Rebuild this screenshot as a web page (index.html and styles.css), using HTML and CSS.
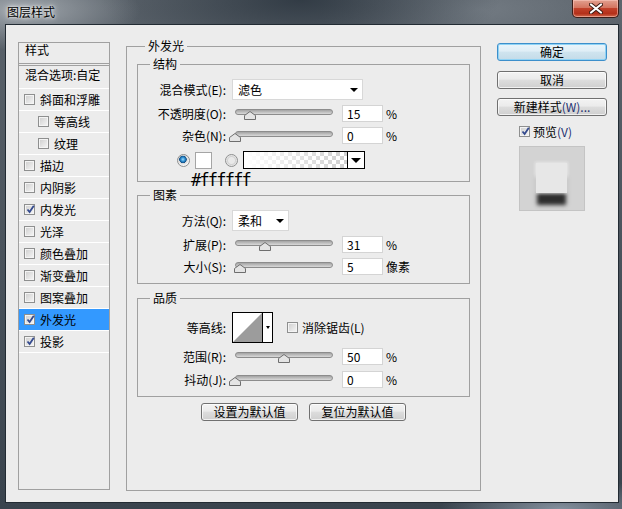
FILE: index.html
```html
<!DOCTYPE html>
<html lang="zh-CN">
<head>
    <meta charset="UTF-8">
    <title>图层样式</title>
    <link rel="stylesheet" href="styles.css">
</head>
<body>
    <div class="window">
        <div class="titlebar">
            <span class="title">图层样式</span>
            <div class="close">
                <svg width="14" height="11" viewBox="0 0 14 11">
                    <path d="M2 1.5 L12 9.5 M12 1.5 L2 9.5" stroke="#3b1a12" stroke-width="4" stroke-linecap="round"/>
                    <path d="M2 1.5 L12 9.5 M12 1.5 L2 9.5" stroke="#fff" stroke-width="2.2" stroke-linecap="round"/>
                </svg>
            </div>
        </div>

        <div class="client">
            <!-- style list -->
            <div class="styles-list">
                <div class="list-head">样式</div>
                <div class="list-blend">混合选项:自定</div>
                <div class="list-item"><span class="cb"></span>斜面和浮雕</div>
                <div class="list-item sub"><span class="cb"></span>等高线</div>
                <div class="list-item sub"><span class="cb"></span>纹理</div>
                <div class="list-item"><span class="cb"></span>描边</div>
                <div class="list-item"><span class="cb"></span>内阴影</div>
                <div class="list-item"><span class="cb checked"></span>内发光</div>
                <div class="list-item"><span class="cb"></span>光泽</div>
                <div class="list-item"><span class="cb"></span>颜色叠加</div>
                <div class="list-item"><span class="cb"></span>渐变叠加</div>
                <div class="list-item"><span class="cb"></span>图案叠加</div>
                <div class="list-item selected"><span class="cb checked"></span>外发光</div>
                <div class="list-item"><span class="cb checked"></span>投影</div>
            </div>

            <!-- outer glow settings -->
            <fieldset class="panel">
                <legend>外发光</legend>

                <fieldset class="group">
                    <legend>结构</legend>
                    <div class="row">
                        <label class="lbl">混合模式(E):</label>
                        <div class="select wide">滤色<i class="arrow"></i></div>
                    </div>
                    <div class="row">
                        <label class="lbl">不透明度(O):</label>
                        <div class="slider"><div class="track"></div><span class="thumb" style="left:15%"><svg width="12" height="9"><polygon points="0.5,4.5 6,0.5 11.5,4.5 11.5,8.5 0.5,8.5" fill="#e4e4e4" stroke="#6e6e6e"/></svg></span></div>
                        <input class="num" type="text" value="15">
                        <span class="unit">%</span>
                    </div>
                    <div class="row">
                        <label class="lbl">杂色(N):</label>
                        <div class="slider"><div class="track"></div><span class="thumb" style="left:0%"><svg width="12" height="9"><polygon points="0.5,4.5 6,0.5 11.5,4.5 11.5,8.5 0.5,8.5" fill="#e4e4e4" stroke="#6e6e6e"/></svg></span></div>
                        <input class="num" type="text" value="0">
                        <span class="unit">%</span>
                    </div>
                    <div class="row colors">
                        <span class="radio on"></span>
                        <span class="swatch"></span>
                        <span class="radio"></span>
                        <div class="gradient"><div class="gradient-fill"></div><div class="gradient-arrow"><i class="arrow"></i></div></div>
                        <span class="hex">#ffffff</span>
                    </div>
                </fieldset>

                <fieldset class="group elements">
                    <legend>图素</legend>
                    <div class="row">
                        <label class="lbl">方法(Q):</label>
                        <div class="select short">柔和<i class="arrow"></i></div>
                    </div>
                    <div class="row">
                        <label class="lbl">扩展(P):</label>
                        <div class="slider"><div class="track"></div><span class="thumb" style="left:31%"><svg width="12" height="9"><polygon points="0.5,4.5 6,0.5 11.5,4.5 11.5,8.5 0.5,8.5" fill="#e4e4e4" stroke="#6e6e6e"/></svg></span></div>
                        <input class="num" type="text" value="31">
                        <span class="unit">%</span>
                    </div>
                    <div class="row">
                        <label class="lbl">大小(S):</label>
                        <div class="slider"><div class="track"></div><span class="thumb" style="left:5%"><svg width="12" height="9"><polygon points="0.5,4.5 6,0.5 11.5,4.5 11.5,8.5 0.5,8.5" fill="#e4e4e4" stroke="#6e6e6e"/></svg></span></div>
                        <input class="num" type="text" value="5">
                        <span class="unit">像素</span>
                    </div>
                </fieldset>

                <fieldset class="group quality">
                    <legend>品质</legend>
                    <div class="row contour-row">
                        <label class="lbl">等高线:</label>
                        <div class="contour">
                            <svg width="29" height="29"><polygon points="0,29 29,0 29,29" fill="#9c9c9c"/></svg>
                            <div class="contour-arrow"><i class="arrow small"></i></div>
                        </div>
                        <span class="cb antialias"></span>
                        <span class="cb-text">消除锯齿(L)</span>
                    </div>
                    <div class="row">
                        <label class="lbl">范围(R):</label>
                        <div class="slider"><div class="track"></div><span class="thumb" style="left:50%"><svg width="12" height="9"><polygon points="0.5,4.5 6,0.5 11.5,4.5 11.5,8.5 0.5,8.5" fill="#e4e4e4" stroke="#6e6e6e"/></svg></span></div>
                        <input class="num" type="text" value="50">
                        <span class="unit">%</span>
                    </div>
                    <div class="row jitter">
                        <label class="lbl">抖动(J):</label>
                        <div class="slider"><div class="track"></div><span class="thumb" style="left:0%"><svg width="12" height="9"><polygon points="0.5,4.5 6,0.5 11.5,4.5 11.5,8.5 0.5,8.5" fill="#e4e4e4" stroke="#6e6e6e"/></svg></span></div>
                        <input class="num" type="text" value="0">
                        <span class="unit">%</span>
                    </div>
                </fieldset>

                <div class="defaults">
                    <button class="btn">设置为默认值</button>
                    <button class="btn">复位为默认值</button>
                </div>
            </fieldset>

            <!-- dialog buttons -->
            <div class="side">
                <button class="btn primary">确定</button>
                <button class="btn cancel">取消</button>
                <button class="btn new-style">新建样式<span class="key">(W)...</span></button>
                <div class="preview-check"><span class="cb checked"></span>预览<span class="key">(V)</span></div>
                <div class="preview">
                    <div class="preview-square"></div>
                </div>
            </div>
        </div>
    </div>
</body>
</html>
```

FILE: styles.css
```css
body {
    margin: 0;
    width: 622px;
    height: 509px;
    overflow: hidden;
    font-family: "Noto Sans CJK SC", "Liberation Sans", sans-serif;
    font-size: 12px;
    color: #000;
}

.window {
    height: 509px;
    display: flex;
    flex-direction: column;
    background:
        radial-gradient(ellipse 120px 40px at 20px 10px, rgba(170, 176, 182, 0.9), transparent),
        radial-gradient(ellipse 200px 60px at 300px 0px, rgba(40, 50, 60, 0.8), transparent),
        radial-gradient(ellipse 160px 50px at 480px 10px, rgba(120, 128, 136, 0.8), transparent),
        radial-gradient(ellipse 120px 30px at 560px 509px, rgba(140, 152, 166, 0.9), transparent),
        linear-gradient(#5b636b, #39434d);
}

.titlebar {
    height: 24px;
    display: flex;
    padding-left: 7px;
}

.title {
    line-height: 24px;
    text-shadow: 0 0 6px #fff, 0 0 3px #fff;
}

.close {
    margin-left: auto;
    margin-right: 3px;
    width: 47px;
    height: 18px;
    box-sizing: border-box;
    border: 1px solid #3b1d18;
    border-top: none;
    border-radius: 0 0 5px 5px;
    background: linear-gradient(#e2a08f 0%, #d47560 45%, #c1412a 50%, #b4301a 80%, #d06a4e 100%);
    box-shadow: inset 0 0 0 1px rgba(255, 210, 200, 0.5);
    display: flex;
    align-items: center;
    justify-content: center;
}

.client {
    height: 479px;
    box-sizing: border-box;
    margin: 0 3px 0 5px;
    border: 1px solid #222b33;
    background: #ececec;
    display: flex;
    align-items: flex-start;
    padding: 14px 0 0 12px;
}

/* ---- style list ---- */

.styles-list {
    margin-top: 3px;
    width: 92px;
    height: 448px;
    box-sizing: border-box;
    border: 1px solid #a0a0a0;
    display: flex;
    flex-direction: column;
}

.list-head {
    height: 23px;
    box-sizing: border-box;
    padding: 0 0 0 6px;
    line-height: 14px;
    border-bottom: 3px double #a0a0a0;
}

.list-blend {
    height: 23px;
    box-sizing: border-box;
    padding: 2px 0 0 6px;
    line-height: 14px;
    border-bottom: 1px solid #fff;
}

.list-item {
    height: 22px;
    box-sizing: border-box;
    border-bottom: 1px solid #fff;
    display: flex;
    align-items: center;
    padding: 0 0 1px 5px;
    gap: 5px;
}

.list-item.sub {
    padding-left: 19px;
}

.list-item.selected {
    background: #3399ff;
}

.cb {
    width: 11px;
    height: 11px;
    box-sizing: border-box;
    border: 1px solid #8e8f8f;
    background: linear-gradient(135deg, #cdcdcd, #f7f7f7);
    box-shadow: inset 0 0 0 1px #f4f4f4;
    flex: none;
    position: relative;
}

.cb.checked::after {
    content: "";
    position: absolute;
    left: 1px;
    top: -1px;
    width: 9px;
    height: 10px;
    background: url("data:image/svg+xml,%3Csvg xmlns='http://www.w3.org/2000/svg' width='9' height='10'%3E%3Cpath d='M1.5 5.5 L3.6 8 L7.8 1.8' fill='none' stroke='%23344a8e' stroke-width='1.8'/%3E%3C/svg%3E");
}

/* ---- fieldsets ---- */

.panel {
    margin: 0 0 0 16px;
    width: 355px;
    height: 452px;
    box-sizing: border-box;
    border: 1px solid #a0a0a0;
    padding: 4px 10px 0 10px;
    min-width: 0;
}

.panel > legend,
.group > legend {
    padding: 0 3px;
    margin-left: 8px;
    line-height: 14px;
}

.group {
    margin: 0;
    border: 1px solid #a0a0a0;
    padding: 8px 0 12px 0;
    min-width: 0;
}

.group > legend {
    margin-left: 12px;
}

.group.elements {
    margin-top: 6px;
    padding-bottom: 8px;
}

.group.quality {
    margin-top: 7px;
    padding: 7px 0 8px 0;
}

.row {
    display: flex;
    align-items: center;
    height: 17px;
    margin-top: 5px;
}

.row:first-of-type {
    margin-top: 0;
    height: 21px;
}

.lbl {
    width: 88px;
    text-align: right;
    flex: none;
}

.select {
    margin-left: 6px;
    height: 21px;
    box-sizing: border-box;
    border: 1px solid #d8d8d8;
    background: #fff;
    display: flex;
    align-items: center;
    padding-left: 5px;
    position: relative;
}

.select.wide {
    width: 131px;
}

.select.short {
    width: 57px;
}

.select .arrow {
    position: absolute;
    right: 4px;
    top: 8px;
}

.arrow {
    width: 0;
    height: 0;
    border-left: 4px solid transparent;
    border-right: 4px solid transparent;
    border-top: 4px solid #000;
}

.arrow.small {
    border-left-width: 2px;
    border-right-width: 2px;
    border-top-width: 3px;
}

.slider {
    margin-left: 9px;
    width: 98px;
    height: 17px;
    position: relative;
    flex: none;
}

.track {
    margin-top: 4px;
    height: 6px;
    box-sizing: border-box;
    border: 1px solid #8c8c8c;
    border-radius: 3px;
    background: linear-gradient(#a3a3a3, #d9d9d9);
}

.thumb {
    position: absolute;
    top: 6px;
    margin-left: -6px;
    width: 12px;
    height: 9px;
    display: block;
    line-height: 0;
}

.num {
    margin-left: 9px;
    width: 41px;
    height: 17px;
    box-sizing: border-box;
    border: 1px solid #d4d4d4;
    padding: 0 0 0 4px;
    font: inherit;
    line-height: 15px;
    color: #000;
    background: #fff;
    outline: none;
}

.unit {
    margin-left: 3px;
}

/* colour row */

.row.colors {
    margin-top: 7px;
    height: 18px;
    padding-left: 39px;
    position: relative;
}

.radio {
    width: 13px;
    height: 13px;
    box-sizing: border-box;
    border-radius: 50%;
    border: 1px solid #8e8f8f;
    background: radial-gradient(circle at 50% 50%, #e9e9e9 0 3px, #d2d2d2 4px, #f4f4f4 6px);
    flex: none;
}

.radio.on {
    background: radial-gradient(circle at 45% 40%, #9fdcff 0, #2f8fd0 2px, #134f86 3.5px, #d8d8d8 4px, #f6f6f6 6px);
}

.swatch {
    margin-left: 5px;
    width: 17px;
    height: 17px;
    box-sizing: border-box;
    border: 1px solid #a5a5a5;
    background: #fff;
}

.row.colors .radio + .gradient {
    margin-left: 5px;
}

.swatch + .radio {
    margin-left: 13px;
}

.gradient {
    width: 122px;
    height: 18px;
    box-sizing: border-box;
    border: 1px solid #000;
    display: flex;
}

.gradient-fill {
    flex: 1;
    background:
        linear-gradient(to right, #fff 0%, rgba(255, 255, 255, 0) 100%),
        conic-gradient(#cfcfcf 25%, #fff 0 50%, #cfcfcf 0 75%, #fff 0) 0 0 / 8px 8px;
}

.gradient-arrow {
    width: 16px;
    border-left: 1px solid #000;
    background: #fff;
    display: flex;
    align-items: center;
    justify-content: center;
}

.gradient-arrow .arrow {
    border-left-width: 5px;
    border-right-width: 5px;
    border-top-width: 5px;
}

.hex {
    position: absolute;
    left: 53px;
    top: 19px;
    font-family: "DejaVu Sans Mono", monospace;
    font-size: 17px;
    line-height: 20px;
    letter-spacing: -1.8px;
}

/* contour row */

.row.contour-row {
    height: 31px;
}

.contour {
    margin-left: 6px;
    width: 41px;
    height: 31px;
    box-sizing: border-box;
    border: 1px solid #000;
    background: #fff;
    display: flex;
    flex: none;
}

.contour svg {
    display: block;
}

.contour-arrow {
    flex: 1;
    border-left: 1px solid #000;
    display: flex;
    align-items: center;
    justify-content: center;
}

.cb.antialias {
    margin-left: 14px;
}

.cb-text {
    margin-left: 4px;
}

.row.jitter {
    margin-top: 6px;
}

/* buttons */

.btn {
    height: 18px;
    box-sizing: border-box;
    padding: 0;
    border: 1px solid #707070;
    border-radius: 3px;
    background: linear-gradient(#f3f3f3 0%, #ebebeb 45%, #dddddd 50%, #cfcfcf 100%);
    box-shadow: inset 0 0 0 1px rgba(255, 255, 255, 0.7);
    font-family: inherit;
    font-size: 12px;
    line-height: 14px;
    color: #000;
}

.defaults {
    margin-top: 6px;
    display: flex;
    justify-content: center;
    gap: 11px;
}

.defaults .btn {
    width: 97px;
}

.side {
    margin: 4px 0 0 16px;
    width: 110px;
    display: flex;
    flex-direction: column;
}

.side .btn {
    width: 110px;
}

.btn.primary {
    border-color: #3d8fcb;
    background: linear-gradient(#eaf5fb 0%, #dfeef6 45%, #cfe4ef 50%, #c3dbe8 100%);
    box-shadow: inset 0 0 0 1px #8fd3f5;
}

.btn.cancel {
    margin-top: 10px;
}

.btn.new-style {
    margin-top: 9px;
}

.key {
    color: #1d2f70;
}

.preview-check {
    margin-top: 8px;
    padding-left: 22px;
    height: 15px;
    display: flex;
    align-items: center;
}

.preview-check .cb {
    margin-right: 3px;
}

.preview {
    margin: 7px 0 0 22px;
    width: 66px;
    height: 65px;
    box-sizing: border-box;
    border: 1px solid #c4c4c4;
    background: #d3d3d3;
    padding: 16px 0 0 16px;
}

.preview-square {
    width: 31px;
    height: 30px;
    background: #e7e7e7;
    box-shadow: 0 0 3px 1px rgba(236, 236, 236, 0.8), 0 13px 4px -1px #2e2e2e;
}
```
